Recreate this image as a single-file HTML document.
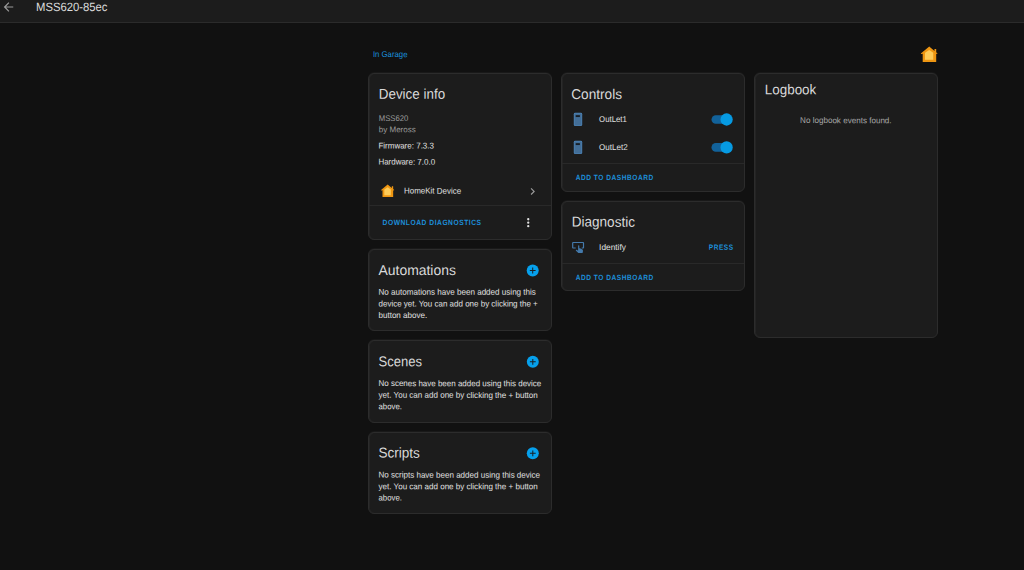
<!DOCTYPE html>
<html><head><meta charset="utf-8">
<style>
*{box-sizing:border-box;margin:0;padding:0}
html,body{width:1024px;height:570px;overflow:hidden;background:#111111;font-family:"Liberation Sans",sans-serif;color:#e1e1e1}
.abs{position:absolute}
.hdr{position:absolute;left:0;top:0;width:1024px;height:23px;background:#1c1c1c;border-bottom:1px solid #2b2b2b}
.card{position:absolute;background:#1c1c1c;border:1px solid #2c2c2c;border-radius:6px;box-shadow:inset 1px 0 0 #242424,0 -1px 0 #191919}
.t{position:absolute;left:0;top:0;white-space:nowrap;line-height:1;transform-origin:0 0}
.div{position:absolute;height:1px;background:#292929}
</style></head><body>
<div class="hdr"></div>

<!-- cards -->
<div class="card" style="left:368px;top:73px;width:184px;height:167px"></div>
<div class="card" style="left:368px;top:249px;width:184px;height:82px"></div>
<div class="card" style="left:368px;top:340px;width:184px;height:83px"></div>
<div class="card" style="left:368px;top:432px;width:184px;height:82px"></div>
<div class="card" style="left:561px;top:73px;width:184px;height:119px"></div>
<div class="card" style="left:561px;top:201px;width:184px;height:90px"></div>
<div class="card" style="left:754px;top:73px;width:184px;height:265px"></div>
<div class="div" style="left:369px;top:205px;width:182px"></div>
<div class="div" style="left:562px;top:163px;width:182px"></div>
<div class="div" style="left:562px;top:263px;width:182px"></div>

<svg class="abs" style="left:0;top:0" width="1024" height="570" viewBox="0 0 1024 570">
<path transform="translate(1.25,-0.2) scale(0.6)" fill="#9a9a9a" d="M20,11V13H8L13.500,18.500L12.080,19.920L4.160,12L12.080,4.080L13.500,5.500L8,11H20Z"/>
<g transform="translate(920.8,46.6) scale(1,0.99)"><path fill="#ee9612" d="M8.450,0 L13.700,4.350 V2.300 H15.400 V5.750 L16.700,6.850 L16.300,7.500 L15.400,7.100 V15.600 H1.900 V7.100 L0.400,7.500 L0,6.850 Z"/><path fill="#fdcb58" d="M8.400,3.400 L12.450,6.100 V13.400 H4.200 V6.100 Z"/></g>
<g transform="translate(381.0,184.5) scale(0.79,0.80)"><path fill="#ee9612" d="M8.450,0 L13.700,4.350 V2.300 H15.400 V5.750 L16.700,6.850 L16.300,7.500 L15.400,7.100 V15.600 H1.900 V7.100 L0.400,7.500 L0,6.850 Z"/><path fill="#fdcb58" d="M8.400,3.400 L12.450,6.100 V13.400 H4.200 V6.100 Z"/></g>
<path transform="translate(525.67,184.44) scale(0.58)" fill="#9b9b9b" d="M8.590,16.580L13.170,12L8.590,7.410L10,6L16,12L10,18L8.590,16.580Z"/>
<path transform="translate(521.29,215.74) scale(0.58)" fill="#e1e1e1" d="M12,16A2,2 0 0,1 14,18A2,2 0 0,1 12,20A2,2 0 0,1 10,18A2,2 0 0,1 12,16M12,10A2,2 0 0,1 14,12A2,2 0 0,1 12,14A2,2 0 0,1 10,12A2,2 0 0,1 12,10M12,4A2,2 0 0,1 14,6A2,2 0 0,1 12,8A2,2 0 0,1 10,6A2,2 0 0,1 12,4Z"/>
<g transform="translate(525.70,263.50)"><circle cx="7" cy="7" r="6" fill="#06a0ec"/><path fill="#191e23" d="M4.100,6.500H9.900V7.500H4.100Z M6.500,4.100H7.500V9.900H6.500Z"/></g>
<g transform="translate(525.80,354.80)"><circle cx="7" cy="7" r="6" fill="#06a0ec"/><path fill="#191e23" d="M4.100,6.500H9.900V7.500H4.100Z M6.500,4.100H7.500V9.900H6.500Z"/></g>
<g transform="translate(525.80,446.30)"><circle cx="7" cy="7" r="6" fill="#06a0ec"/><path fill="#191e23" d="M4.100,6.500H9.900V7.500H4.100Z M6.500,4.100H7.500V9.900H6.500Z"/></g>
<rect x="573.8" y="112.80" width="8.400" height="13.300" rx="1.400" fill="#4c84b8"/><rect x="574.5" y="113.50" width="7" height="11.900" rx="0.800" fill="#436e97"/><rect x="575.7" y="115.15" width="4.200" height="1.900" fill="#182028"/>
<rect x="573.8" y="140.80" width="8.400" height="13.300" rx="1.400" fill="#4c84b8"/><rect x="574.5" y="141.50" width="7" height="11.900" rx="0.800" fill="#436e97"/><rect x="575.7" y="143.15" width="4.200" height="1.900" fill="#182028"/>
<rect x="711.5" y="115.20" width="17" height="8.600" rx="4.300" fill="#12629a"/><circle cx="726.6" cy="119.50" r="6.150" fill="#069ae2"/>
<rect x="711.5" y="143.10" width="17" height="8.600" rx="4.300" fill="#12629a"/><circle cx="726.6" cy="147.40" r="6.150" fill="#069ae2"/>
<path transform="translate(570.9,240.8) scale(0.6,0.555)" fill="#447aac" d="M20 20.500C19.970 21.320 19.320 21.970 18.500 22H13C12.620 22 12.260 21.850 12 21.570L8 17.370L8.740 16.600C8.930 16.390 9.200 16.280 9.490 16.280H9.700L12 18V9C12 8.450 12.450 8 13 8S14 8.450 14 9V13.470L15.210 13.600L19.150 15.790C19.680 16.030 20 16.560 20 17.140V20.500M20 2H4C2.900 2 2 2.900 2 4V12C2 13.110 2.900 14 4 14H8V12L4 12L4 4H20L20 12H18V14H20V13.960L20.040 14C21.130 14 22 13.090 22 12V4C22 2.900 21.110 2 20 2Z"/>

</svg>

<div class="t" style="font-size:12px;color:#dcdcdc;transform:translate(36.00px,1.00px) rotate(0.05deg) scaleX(0.9402)">MSS620-85ec</div>
<div class="t" style="font-size:8.4px;color:#1a90de;transform:translate(372.90px,50.10px) rotate(0.05deg) scaleX(0.9289)">In Garage</div>
<div class="t" style="font-size:14.2px;color:#d9d9d9;transform:translate(378.80px,86.80px) rotate(0.05deg) scaleX(0.9446)">Device info</div>
<div class="t" style="font-size:8.2px;color:#9b9b9b;transform:translate(378.80px,114.90px) rotate(0.05deg) scaleX(0.9393)">MSS620</div>
<div class="t" style="font-size:8.2px;color:#9b9b9b;transform:translate(378.80px,126.20px) rotate(0.05deg) scaleX(0.9771)">by Meross</div>
<div class="t" style="font-size:8.4px;color:#e1e1e1;transform:translate(378.40px,141.50px) rotate(0.05deg) scaleX(0.9555)">Firmware: 7.3.3</div>
<div class="t" style="font-size:8.4px;color:#e1e1e1;transform:translate(378.40px,157.60px) rotate(0.05deg) scaleX(0.9514)">Hardware: 7.0.0</div>
<div class="t" style="font-size:8.4px;color:#e1e1e1;transform:translate(404.00px,186.60px) rotate(0.05deg) scaleX(0.9509)">HomeKit Device</div>
<div class="t" style="font-size:7.6px;color:#1c8fda;font-weight:bold;letter-spacing:0.6px;transform:translate(382.60px,218.90px) rotate(0.05deg) scaleX(0.8801)">DOWNLOAD DIAGNOSTICS</div>
<div class="t" style="font-size:14.2px;color:#d9d9d9;transform:translate(378.50px,263.00px) rotate(0.05deg) scaleX(0.9813)">Automations</div>
<div class="t" style="font-size:8.4px;color:#e1e1e1;transform:translate(378.50px,287.70px) rotate(0.05deg) scaleX(0.9631)">No automations have been added using this</div>
<div class="t" style="font-size:8.4px;color:#e1e1e1;transform:translate(378.50px,299.40px) rotate(0.05deg) scaleX(0.9543)">device yet. You can add one by clicking the +</div>
<div class="t" style="font-size:8.4px;color:#e1e1e1;transform:translate(378.50px,311.00px) rotate(0.05deg) scaleX(0.9593)">button above.</div>
<div class="t" style="font-size:14.2px;color:#d9d9d9;transform:translate(378.50px,354.20px) rotate(0.05deg) scaleX(0.9191)">Scenes</div>
<div class="t" style="font-size:8.4px;color:#e1e1e1;transform:translate(378.50px,379.10px) rotate(0.05deg) scaleX(0.9527)">No scenes have been added using this device</div>
<div class="t" style="font-size:8.4px;color:#e1e1e1;transform:translate(378.50px,390.80px) rotate(0.05deg) scaleX(0.9596)">yet. You can add one by clicking the + button</div>
<div class="t" style="font-size:8.4px;color:#e1e1e1;transform:translate(378.50px,402.30px) rotate(0.05deg) scaleX(0.9302)">above.</div>
<div class="t" style="font-size:14.2px;color:#d9d9d9;transform:translate(378.50px,445.60px) rotate(0.05deg) scaleX(0.9548)">Scripts</div>
<div class="t" style="font-size:8.4px;color:#e1e1e1;transform:translate(378.50px,470.60px) rotate(0.05deg) scaleX(0.9588)">No scripts have been added using this device</div>
<div class="t" style="font-size:8.4px;color:#e1e1e1;transform:translate(378.50px,482.20px) rotate(0.05deg) scaleX(0.9596)">yet. You can add one by clicking the + button</div>
<div class="t" style="font-size:8.4px;color:#e1e1e1;transform:translate(378.50px,493.40px) rotate(0.05deg) scaleX(0.9302)">above.</div>
<div class="t" style="font-size:14.2px;color:#d9d9d9;transform:translate(571.30px,86.90px) rotate(0.05deg) scaleX(0.9594)">Controls</div>
<div class="t" style="font-size:8.4px;color:#e1e1e1;transform:translate(599.10px,115.10px) rotate(0.05deg) scaleX(0.9291)">OutLet1</div>
<div class="t" style="font-size:8.4px;color:#e1e1e1;transform:translate(599.10px,142.90px) rotate(0.05deg) scaleX(0.9560)">OutLet2</div>
<div class="t" style="font-size:7.6px;color:#1c8fda;font-weight:bold;letter-spacing:0.6px;transform:translate(575.70px,174.00px) rotate(0.05deg) scaleX(0.8664)">ADD TO DASHBOARD</div>
<div class="t" style="font-size:14.2px;color:#d9d9d9;transform:translate(571.70px,214.60px) rotate(0.05deg) scaleX(0.9555)">Diagnostic</div>
<div class="t" style="font-size:8.4px;color:#e1e1e1;transform:translate(599.10px,242.90px) rotate(0.05deg) scaleX(0.9920)">Identify</div>
<div class="t" style="font-size:7.6px;color:#1c8fda;font-weight:bold;letter-spacing:0.6px;transform:translate(708.80px,243.80px) rotate(0.05deg) scaleX(0.8632)">PRESS</div>
<div class="t" style="font-size:7.6px;color:#1c8fda;font-weight:bold;letter-spacing:0.6px;transform:translate(575.70px,274.00px) rotate(0.05deg) scaleX(0.8664)">ADD TO DASHBOARD</div>
<div class="t" style="font-size:14px;color:#d9d9d9;transform:translate(764.80px,82.20px) rotate(0.05deg) scaleX(0.9587)">Logbook</div>
<div class="t" style="font-size:8.4px;color:#a8a8a8;transform:translate(800.10px,116.10px) rotate(0.05deg) scaleX(0.9633)">No logbook events found.</div>

</body></html>
